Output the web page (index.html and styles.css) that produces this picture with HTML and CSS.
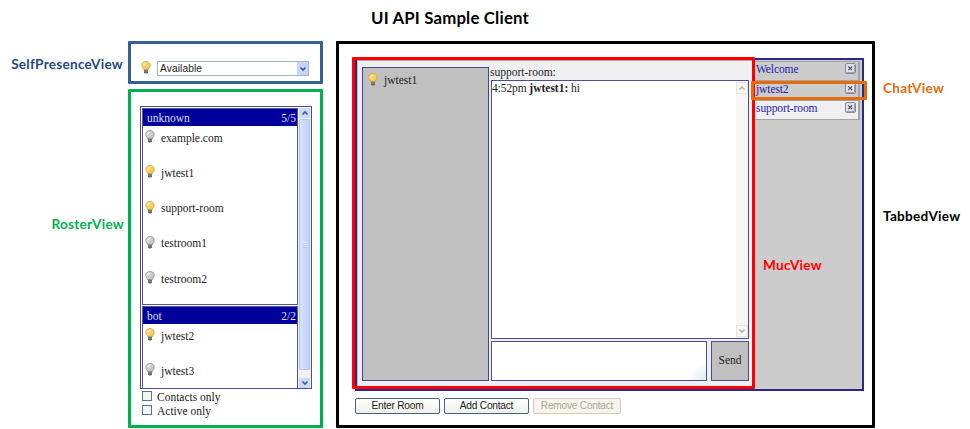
FILE: index.html
```
<!DOCTYPE html>
<html lang="en">
<head>
<meta charset="utf-8">
<title>UI API Sample Client</title>
<link rel="stylesheet" href="styles.css">
</head>
<body>
<svg class="defs" width="0" height="0">
  <defs>
    <linearGradient id="gold" x1="0" y1="0" x2="1" y2="1"><stop offset="0" stop-color="#ffe99a"/><stop offset="1" stop-color="#f3b93a"/></linearGradient>
    <linearGradient id="grey" x1="0" y1="0" x2="1" y2="1"><stop offset="0" stop-color="#ececec"/><stop offset="1" stop-color="#b4b4b4"/></linearGradient>
    <symbol id="base" viewBox="0 0 10 13"><path d="M3 8.700h4v2.600L6 12.500H4l-1-1.200z" fill="#666"/><path d="M3 10h4" stroke="#aaa" stroke-width=".6"/></symbol>
    <symbol id="on" viewBox="0 0 10 13"><path d="M5 .6a4.200 4 0 0 1 4.200 4C9.200 6.500 7.500 7 7.200 8.900H2.800C2.500 7 .8 6.500 .8 4.600A4.200 4 0 0 1 5 .6z" fill="url(#gold)" stroke="#d69e32" stroke-width=".8"/><path d="M3 4.200Q3.300 2.500 5 2.300" stroke="#fff8d8" fill="none"/><use href="#base" width="10" height="13"/></symbol>
    <symbol id="off" viewBox="0 0 10 13"><path d="M5 .6a4.200 4 0 0 1 4.200 4C9.200 6.500 7.500 7 7.200 8.900H2.800C2.500 7 .8 6.500 .8 4.600A4.200 4 0 0 1 5 .6z" fill="url(#grey)" stroke="#888" stroke-width=".8"/><path d="M3 4.200Q3.300 2.500 5 2.300" stroke="#fff" fill="none"/><use href="#base" width="10" height="13"/></symbol>
    <symbol id="down" viewBox="0 0 8 6"><path d="M1.500 1.500 4 4l2.500-2.500" fill="none" stroke="currentColor" stroke-width="1.7"/></symbol>
    <symbol id="up" viewBox="0 0 8 6"><path d="M1.500 4.500 4 2l2.500 2.500" fill="none" stroke="currentColor" stroke-width="1.7"/></symbol>
    <symbol id="close" viewBox="0 0 11 11"><rect x=".5" y=".5" width="10" height="10" rx="1.500" fill="#dfe0ea" stroke="#8589a0"/><path d="M1.500 9.700h8M9.700 2v7" stroke="#8c90a6"/><path d="m3.300 3.300 3.900 3.900m0-3.900-3.900 3.900" stroke="#48485c" stroke-width="1.100"/></symbol>
  </defs>
</svg>
<h1 class="title">UI API Sample Client</h1>
<main class="page">
  <div class="labels-left">
    <span class="label presence-label">SelfPresenceView</span>
    <span class="label roster-label">RosterView</span>
  </div>
  <div class="left">
    <section class="presence">
      <svg class="bulb"><use href="#on"/></svg>
      <div class="select"><span>Available</span><i class="select-arrow"><svg class="arrow"><use href="#down"/></svg></i></div>
    </section>
    <section class="roster">
      <div class="list">
        <div class="groups">
          <div class="group group-first">
            <header><span>unknown</span><span>5/5</span></header>
            <div class="contact"><svg class="bulb"><use href="#off"/></svg><span>example.com</span></div>
            <div class="contact"><svg class="bulb"><use href="#on"/></svg><span>jwtest1</span></div>
            <div class="contact"><svg class="bulb"><use href="#on"/></svg><span>support-room</span></div>
            <div class="contact"><svg class="bulb"><use href="#off"/></svg><span>testroom1</span></div>
            <div class="contact"><svg class="bulb"><use href="#off"/></svg><span>testroom2</span></div>
          </div>
          <div class="group group-last">
            <header><span>bot</span><span>2/2</span></header>
            <div class="contact"><svg class="bulb"><use href="#on"/></svg><span>jwtest2</span></div>
            <div class="contact"><svg class="bulb"><use href="#off"/></svg><span>jwtest3</span></div>
          </div>
        </div>
        <div class="scroll">
          <i class="scroll-btn"><svg class="arrow"><use href="#up"/></svg></i>
          <i class="thumb"><b class="grip"></b></i>
          <i class="scroll-btn"><svg class="arrow"><use href="#down"/></svg></i>
        </div>
      </div>
      <div class="check"><i class="box"></i><span>Contacts only</span></div>
      <div class="check"><i class="box"></i><span>Active only</span></div>
    </section>
  </div>
  <section class="tabbed">
    <div class="panel">
      <div class="muc">
        <div class="members"><svg class="bulb"><use href="#on"/></svg><span>jwtest1</span></div>
        <div class="room">
          <div class="room-name">support-room:</div>
          <div class="log">
            <p class="message">4:52pm <b>jwtest1:</b> hi</p>
            <div class="log-scroll"><i><svg class="arrow"><use href="#up"/></svg></i><i><svg class="arrow"><use href="#down"/></svg></i></div>
          </div>
          <div class="compose"><div class="input"></div><div class="send">Send</div></div>
        </div>
      </div>
      <div class="tabs">
        <div class="tab"><span>Welcome</span><svg class="close"><use href="#close"/></svg></div>
        <div class="tab"><span>jwtest2</span><svg class="close"><use href="#close"/></svg></div>
        <div class="tab active"><span>support-room</span><svg class="close"><use href="#close"/></svg></div>
        <span class="label muc-label">MucView</span>
        <div class="chat-outline"></div>
      </div>
      <div class="muc-outline"></div>
    </div>
    <div class="buttons">
      <div class="button">Enter Room</div>
      <div class="button">Add Contact</div>
      <div class="button disabled">Remove Contact</div>
    </div>
  </section>
  <div class="labels-right">
    <span class="label chat-label">ChatView</span>
    <span class="label tabbed-label">TabbedView</span>
  </div>
</main>
</body>
</html>
```
FILE: styles.css
```
* { box-sizing: border-box; }
body {
  margin: 0;
  width: 970px;
  height: 429px;
  overflow: hidden;
  background: #fff;
  color: #222;
  font: 11.5px/14px "Liberation Serif", serif;
}
svg { display: block; flex: none; }
i { font-style: normal; }
.defs { position: absolute; }
.title {
  margin: 0;
  height: 41px;
  padding: 7px 0 0 371px;
  font: bold 16.8px/22px Lato, sans-serif;
  letter-spacing: .17px;
  color: #000;
  white-space: nowrap;
}
.page { display: grid; grid-template-columns: 128px 195px 552px 95px; }
.label {
  display: block;
  font: bold 13.6px/18px Lato, sans-serif;
  letter-spacing: .25px;
  white-space: nowrap;
}
.labels-left { text-align: right; }
.presence-label { margin: 14px 5px 0 0; color: #1f497d; }
.roster-label { margin: 142px 4px 0 0; color: #00b050; }
.labels-right { padding-left: 8px; }
.chat-label { margin-top: 38px; color: #e46c0a; }
.tabbed-label { margin-top: 110px; color: #000; }
.bulb { width: 10px; height: 13px; }
.arrow { width: 8px; height: 6px; }

.presence {
  height: 43px;
  margin-bottom: 5px;
  border: 3px solid #376092;
  border-radius: 1px;
  display: flex;
  padding: 17px 0 0 10px;
}
.select {
  margin-left: 6px;
  width: 152px;
  height: 15px;
  border: 1px solid #9eb3cc;
  display: flex;
  justify-content: space-between;
  padding: 0 0 0 2px;
  font: 10.2px/13px "Liberation Sans", sans-serif;
  letter-spacing: .1px;
}
.select-arrow {
  width: 11px;
  background: #c5d6fa;
  display: grid;
  place-items: center;
  color: #435b8c;
}

.roster {
  height: 339px;
  border: 3px solid #00b050;
  border-radius: 1px;
  padding: 14px 0 0 9px;
}
.list {
  width: 172px;
  height: 283px;
  border: 1px solid #4b4a9b;
  display: flex;
  padding: 1px 0 0 1px;
  margin-bottom: 1px;
}
.groups { width: 156px; overflow: hidden; }
.group { border: 1px solid #5552a1; }
.group-first { height: 197px; margin-bottom: 1px; }
.group-last { height: 83px; border-bottom: 0; }
.group header {
  height: 17px;
  background: #00009a;
  color: #dedeee;
  display: flex;
  justify-content: space-between;
  padding: 2px 1px 0 4px;
}
.contact { height: 35.3px; display: flex; padding: 4px 0 0 2px; }
.contact span { margin-left: 6px; padding-top: .5px; }
.scroll {
  width: 13px;
  background: #f1f2ee;
  display: flex;
  flex-direction: column;
  align-items: center;
}
.scroll-btn {
  width: 11px;
  height: 10px;
  background: #c9d9fa;
  border-radius: 1px;
  display: grid;
  place-items: center;
  color: #465d8e;
}
.thumb {
  width: 11px;
  height: 251px;
  margin: 1px 0 8px;
  border: 1px solid #b1c5ed;
  border-radius: 1px;
  background: linear-gradient(90deg, #d5e1fd, #bfd1fa);
  display: grid;
  place-items: center;
}
.grip { width: 4px; height: 6px; background: repeating-linear-gradient(#dce7ff 0 1px, #b5c8f0 1px 2px); }
.check { display: flex; height: 14px; padding-left: 2px; }
.box { width: 10px; height: 10px; margin-top: 1px; border: 1px solid #57718e; background: #f3f5f1; }
.check span { margin-left: 5px; }

.tabbed {
  width: 539px;
  height: 387px;
  margin-left: 13px;
  border: 3px solid #000;
  border-radius: 1px;
  padding: 14px 0 0 16px;
}
.panel {
  position: relative;
  width: 509px;
  height: 333px;
  border: 2px solid #29298c;
  background: #ccc;
  display: flex;
}
.muc {
  width: 398px;
  background: #efeff1;
  border-top: 1px solid #aaa;
  border-left: 1px solid #bbb;
  padding: 6px 0 0 4px;
  display: flex;
}
.members {
  width: 127px;
  height: 314px;
  border: 1px solid #4242a0;
  background: #c0c0c0;
  display: flex;
  padding: 5px 0 0 5px;
}
.members span { margin-left: 6px; }
.room { margin-left: 2px; width: 258px; }
.room-name { height: 13px; line-height: 11px; margin-left: -1px; }
.log {
  height: 259px;
  border: 1px solid #4b4a9b;
  background: #fff;
  display: flex;
  justify-content: space-between;
}
.message { margin: 0; letter-spacing: -.1px; }
.message b { letter-spacing: 0; }
.log-scroll {
  width: 12px;
  background: #f5f6f1;
  display: flex;
  flex-direction: column;
  justify-content: space-between;
  padding: 1px 0;
  color: #b7b7ad;
}
.log-scroll i { height: 12px; border: 1px solid #e4e5dc; display: grid; place-items: center; }
.compose { display: flex; justify-content: space-between; margin-top: 2px; }
.input {
  width: 216px;
  height: 40px;
  border: 1px solid #4b4a9b;
  background: radial-gradient(circle at 100% 100%, #dceced 0, #fff 18px);
}
.send {
  width: 38px;
  height: 40px;
  border: 1px solid #4b4a9b;
  background: #c0c0c0;
  text-align: center;
  line-height: 36px;
}
.tabs { position: relative; flex: 1; padding-top: 1px; }
.tab {
  height: 19.7px;
  width: 105px;
  border: solid #a4a4a4;
  border-width: 1px 2px 1px 0;
  display: flex;
  justify-content: space-between;
  padding: 1px 2px 0 1px;
  color: #2222ad;
  background: #ccc;
  line-height: 13px;
  letter-spacing: -.1px;
}
.tab.active { background: #efeff2; }
.close { width: 11px; height: 11px; }
.muc-label { margin: 136px 0 0 8px; color: #f00; }
.muc-outline {
  position: absolute;
  left: -5px;
  top: -3px;
  width: 403px;
  height: 332px;
  border: 3px solid #f00;
  border-radius: 1px;
}
.chat-outline {
  position: absolute;
  z-index: 1;
  left: -4px;
  top: 21px;
  width: 116px;
  height: 19px;
  border: 3px solid #e46c0a;
  border-radius: 1px;
}
.buttons { display: flex; gap: 4px; margin-top: 7px; }
.button {
  width: 85px;
  height: 16px;
  border: 1px solid #416580;
  border-radius: 2px;
  background: linear-gradient(#fff, #f0f0e9);
  font: 10.2px/14px "Liberation Sans", sans-serif;
  letter-spacing: -.25px;
  text-align: center;
  white-space: nowrap;
}
.button.disabled { width: 88px; border-color: #ceccba; background: #f5f5ed; color: #aaa899; }
```
